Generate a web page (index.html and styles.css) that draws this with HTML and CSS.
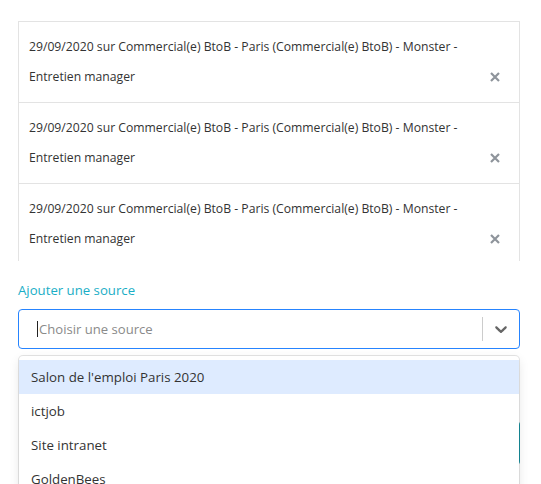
FILE: index.html
```html
<!DOCTYPE html>
<html lang="fr">
<head>
<meta charset="utf-8">
<title>Sources</title>
<link rel="stylesheet" href="styles.css">
</head>
<body>
<div class="page">
  <div class="list">
    <div class="item">
      <p class="item-text">29/09/2020 sur Commercial(e) BtoB - Paris (Commercial(e) BtoB) - Monster - Entretien manager</p>
      <span class="close"><svg viewBox="0 0 10 10" width="10" height="10"><path d="M1 1L9 9M9 1L1 9" /></svg></span>
    </div>
    <div class="item">
      <p class="item-text">29/09/2020 sur Commercial(e) BtoB - Paris (Commercial(e) BtoB) - Monster - Entretien manager</p>
      <span class="close"><svg viewBox="0 0 10 10" width="10" height="10"><path d="M1 1L9 9M9 1L1 9" /></svg></span>
    </div>
    <div class="item">
      <p class="item-text">29/09/2020 sur Commercial(e) BtoB - Paris (Commercial(e) BtoB) - Monster - Entretien manager</p>
      <span class="close"><svg viewBox="0 0 10 10" width="10" height="10"><path d="M1 1L9 9M9 1L1 9" /></svg></span>
    </div>
  </div>

  <div class="field">
    <div class="label">Ajouter une source</div>
    <div class="select">
      <div class="control">
        <div class="value">
          <span class="caret"></span>
          <span class="placeholder">Choisir une source</span>
        </div>
        <div class="indicators">
          <span class="sep"></span>
          <span class="chev"><svg viewBox="0 0 20 20" width="20" height="20"><path d="M4.516 7.548c0.436-0.446 1.043-0.481 1.576 0l3.908 3.747 3.908-3.747c0.533-0.481 1.141-0.446 1.574 0 0.436 0.445 0.408 1.197 0 1.615-0.406 0.418-4.695 4.502-4.695 4.502-0.217 0.223-0.502 0.335-0.787 0.335s-0.57-0.112-0.789-0.335c0 0-4.287-4.084-4.695-4.502s-0.436-1.17 0-1.615z"/></svg></span>
        </div>
      </div>
      <div class="menu">
        <div class="option focused">Salon de l'emploi Paris 2020</div>
        <div class="option">ictjob</div>
        <div class="option">Site intranet</div>
        <div class="option">GoldenBees</div>
        <div class="option">LinkedIn</div>
      </div>
    </div>
  </div>

  <div class="actions">
    <button class="btn">Enregistrer</button>
  </div>
</div>
</body>
</html>
```

FILE: styles.css
```css
html, body {
  margin: 0;
  padding: 0;
  background: #ffffff;
}
body {
  font-family: "Open Sans", "DejaVu Sans", sans-serif;
  color: #333333;
}
.page {
  padding: 21px 21px 120px 18px;
}
.list {
  border: 1px solid #e3e3e3;
  border-bottom: none;
  height: 239px;
  overflow: hidden;
}
.item {
  display: flex;
  align-items: flex-end;
  border-bottom: 1px solid #e3e3e3;
  padding: 10px 19px 10px 10px;
}
.item-text {
  flex: 1;
  margin: 0;
  font-size: 12.2px;
  line-height: 30px;
  color: #333333;
  padding-right: 20px;
}
.close {
  display: flex;
  align-items: center;
  height: 30px;
}
.close svg path {
  stroke: #8e949b;
  stroke-width: 2.2;
  fill: none;
}
.field {
  margin-top: 20px;
}
.label {
  font-size: 13.2px;
  line-height: 18px;
  color: #19aec6;
  margin-bottom: 10px;
}
.select {
  position: relative;
}
.control {
  display: flex;
  align-items: stretch;
  height: 40px;
  box-sizing: border-box;
  border: 1px solid #2684ff;
  border-radius: 4px;
  background: #fff;
}
.value {
  flex: 1;
  display: flex;
  align-items: center;
  padding-left: 18px;
}
.caret {
  width: 1px;
  height: 16px;
  background: #222;
  margin-right: 1px;
}
.placeholder {
  font-size: 13.1px;
  color: #8a8a8a;
}
.indicators {
  display: flex;
  align-items: stretch;
}
.sep {
  width: 1px;
  background: #cccccc;
  margin: 7px 0;
}
.chev {
  display: flex;
  align-items: center;
  padding: 0 8px;
}
.chev svg {
  fill: #666666;
}
.menu {
  position: absolute;
  top: calc(100% + 7px);
  left: 1px;
  right: 1px;
  background: #fff;
  border-radius: 4px;
  box-shadow: 0 0 0 1px rgba(0, 0, 0, 0.1), 0 4px 11px rgba(0, 0, 0, 0.1);
  padding: 4px 0;
  z-index: 2;
}
.option {
  font-size: 13.3px;
  line-height: 18px;
  padding: 8px 12px;
  color: #333;
}
.option.focused {
  background: #deebff;
}
.actions {
  display: flex;
  justify-content: flex-end;
  margin-top: 72px;
}
.btn {
  height: 44px;
  padding: 0 24px;
  border: none;
  border-radius: 4px;
  background: #1899a8;
  color: #fff;
  font-family: inherit;
  font-size: 13px;
}
```
